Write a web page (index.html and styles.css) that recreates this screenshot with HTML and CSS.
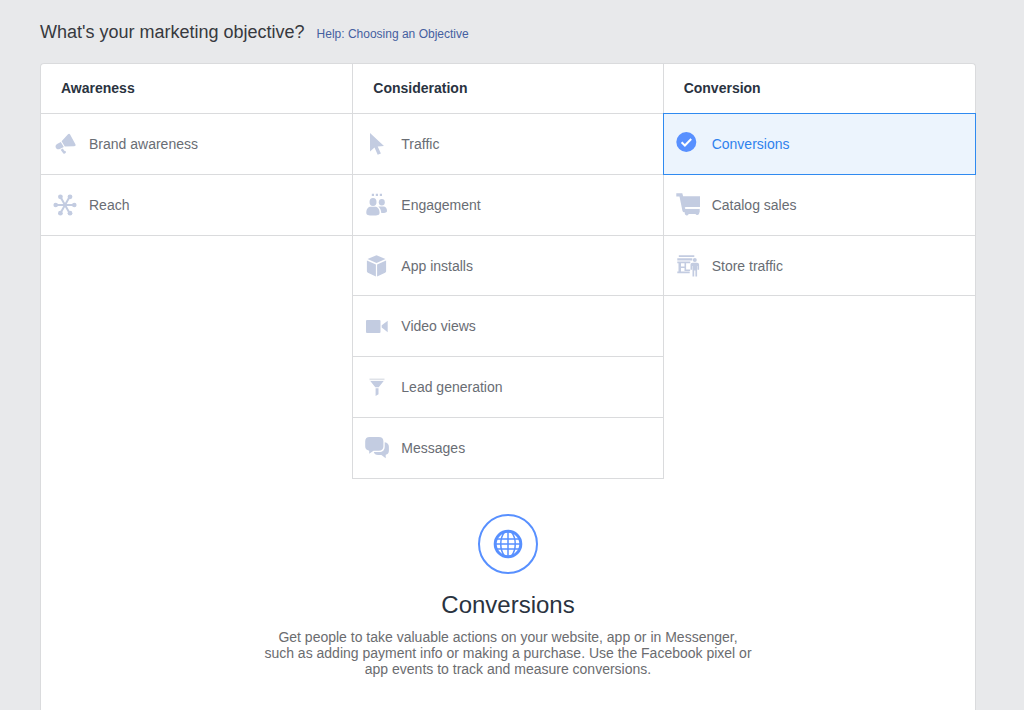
FILE: index.html
```html
<!DOCTYPE html>
<html lang="en">
<head>
<meta charset="utf-8">
<meta name="viewport" content="width=device-width, initial-scale=1">
<title>Marketing objective</title>
<link rel="stylesheet" href="styles.css">
</head>
<body>
<main class="page">
  <header class="page-header">
    <h1 class="page-title">What's your marketing objective?</h1>
    <a class="help-link" href="#help">Help: Choosing an Objective</a>
  </header>
  <div class="panel">
    <div class="columns">
      <section class="column">
        <h2 class="column-title">Awareness</h2>
        <div class="options">
          <button class="option" type="button">
            <svg class="icon" viewBox="0 0 24 24" aria-hidden="true"><path d="M15 2.300c.7-.9 1.600-.8 2.100.1l5.300 9.900c.6 1.300-.1 2-1.300 2l-9.300.3-3.200-5.400z"/><path d="M7.800 9.900l3 5.100-4 2c-3.500 1.600-6-3-2.700-5zM7.600 17.700l2.300-1.100 1.300 2.200 1.200.3c1.500 1.200-.4 3.500-2 2.300z"/></svg>
            <span>Brand awareness</span>
          </button>
          <button class="option" type="button">
            <svg class="icon" viewBox="0 0 24 24" aria-hidden="true"><path class="line" d="M3 12h18M7.500 4l9 16M16.500 4l-9 16"/><circle cx="2.700" cy="12" r="2.300"/><circle cx="21.300" cy="12" r="2.300"/><circle cx="7.400" cy="3.800" r="2.400"/><circle cx="17" cy="3.800" r="2.400"/><circle cx="7.400" cy="20.200" r="2.400"/><circle cx="17" cy="20.200" r="2.400"/></svg>
            <span>Reach</span>
          </button>
        </div>
      </section>
      <section class="column">
        <h2 class="column-title">Consideration</h2>
        <div class="options">
          <button class="option" type="button">
            <svg class="icon" viewBox="0 0 24 24" aria-hidden="true"><path d="M5 1v18.500l4.500-4 3.200 7.300 3.200-1.300-3.200-7 6.300-.5z"/></svg>
            <span>Traffic</span>
          </button>
          <button class="option" type="button">
            <svg class="icon" viewBox="0 0 24 24" aria-hidden="true"><path d="M6.800.800h2.200v2.200H6.800zM10.800.800H13v2.200h-2.200zM14.800.800H17v2.200h-2.200z"/><ellipse cx="8" cy="9" rx="3.500" ry="3.900"/><ellipse cx="16.800" cy="9.200" rx="3" ry="3.300"/><path d="M1.300 19.700c0-4.200 2.200-6 4.400-6H10c2.200 0 4.600 1.800 4.600 6 0 2.200-2 2.900-6.600 2.900s-6.700-.7-6.700-2.900zM13.300 13.400h5.200c2.100 0 3.500 1.700 3.500 4.500 0 1.500-1.900 2.100-5.700 2-.2-2.700-1.200-4.900-3-6.500z"/></svg>
            <span>Engagement</span>
          </button>
          <button class="option" type="button">
            <svg class="icon" viewBox="0 0 24 24" aria-hidden="true"><path d="M11.500 1.300l9 3.700-9 4-9-4zM1.900 6.500l9 3.900v12.200l-8-3.800c-.7-.4-1-.8-1-1.500zM21.100 6.500l-9 3.900v12.200l8-3.800c.7-.4 1-.8 1-1.500z"/></svg>
            <span>App installs</span>
          </button>
          <button class="option" type="button">
            <svg class="icon" viewBox="0 0 24 24" aria-hidden="true"><rect x="1" y="6" width="14.500" height="13" rx="1"/><path d="M22.700 6.800v11.400l-6-4.600v-2.300z"/></svg>
            <span>Video views</span>
          </button>
          <button class="option" type="button">
            <svg class="icon" viewBox="0 0 24 24" aria-hidden="true"><path class="pale" d="M4.500 3.500h15v1.700h-15z"/><path d="M5.300 6h13.400l-5 6.300h-3.400zM10.600 13.300h2.900v6l-2.900 1.600z"/></svg>
            <span>Lead generation</span>
          </button>
          <button class="option" type="button">
            <svg class="icon" viewBox="0 0 24 24" aria-hidden="true"><path d="M4.600 1h9.200c3 0 4.600 1.600 4.600 4.200v5.300c0 2.600-1.600 4.300-4.600 4.300H8.500l-4.300 3v-3.100C1.500 14 .2 12.900.2 10.500V5.200C.2 2.600 1.800 1 4.600 1z"/><path d="M19.700 6.300c2.700.5 4.200 1.800 4.200 4.400v4c0 2.300-1.200 3.700-3.200 4.100v3.500l-4.300-3.300h-3.300c-2.400 0-3.800-1.200-4.300-3h5.300c3.600 0 5.600-2 5.600-5.600z"/></svg>
            <span>Messages</span>
          </button>
        </div>
      </section>
      <section class="column">
        <h2 class="column-title">Conversion</h2>
        <div class="options">
          <button class="option option-selected" type="button" aria-pressed="true">
            <svg class="icon" viewBox="0 0 24 24" aria-hidden="true"><circle cx="10.300" cy="10" r="10"/><path class="tick" d="M5.600 10.200l3.300 3.300 6.300-6.500"/></svg>
            <span>Conversions</span>
          </button>
          <button class="option" type="button">
            <svg class="icon" viewBox="0 0 24 24" aria-hidden="true"><path d="M.3.300h6l.8 3h17v11H8.800l.3 1.500h14.600v3.700h-.6a2 2 0 0 1-3.600 1.600h-6.800A2 2 0 0 1 9 19.500c-1.500 0-2.400-.8-2.700-2.200L3.500 3.500H.3z"/><path class="gap" d="M9.500 14h14.500v1.800H9.500z"/></svg>
            <span>Catalog sales</span>
          </button>
          <button class="option" type="button">
            <svg class="icon" viewBox="0 0 24 24" aria-hidden="true"><path d="M2.800 1.300h15.500V3H2.800zM1.300 4.200h15v2.300h-15zM1.300 7.500h13v1.700H5v3.300h3.500V9.200h1.600v6.300h4v1.600h-5.600v-3H5v3.500h8.700v1.700H1.300v-1.700h1.200V9.200H1.300z"/><circle cx="18.800" cy="6" r="2"/><path d="M16.500 8.800h4.600c1.200 0 2 .8 2 2v5h-1.600V12h-.4v10.400h-1.700v-6h-1.200v6h-1.700V12h-.4v3.800h-1.600v-5c0-1.200.8-2 2-2z"/></svg>
            <span>Store traffic</span>
          </button>
        </div>
      </section>
    </div>
    <section class="summary">
      <div class="summary-badge">
        <svg class="globe" viewBox="0 0 30 30" aria-hidden="true"><circle class="globe-rim" cx="15" cy="15" r="12.800"/><path class="globe-grid" d="M15 2v26M3.500 10h23M2 15h26M3.500 20h23M11.500 3c-5 6.500-5 17.500 0 24M18.500 3c5 6.500 5 17.500 0 24"/></svg>
      </div>
      <h2 class="summary-title">Conversions</h2>
      <p class="summary-text">Get people to take valuable actions on your website, app or in Messenger, such as adding payment info or making a purchase. Use the Facebook pixel or app events to track and measure conversions.</p>
    </section>
  </div>
</main>
</body>
</html>
```
FILE: styles.css
```css
* {
  box-sizing: border-box;
}

body {
  margin: 0;
  background: #e8e9eb;
  color: #696d74;
  font-family: "Liberation Sans", Arial, sans-serif;
  font-size: 14px;
}

.page {
  display: flex;
  flex-direction: column;
  min-height: 100vh;
  padding: 20px 48px 0 40px;
}

.page-header {
  display: flex;
  align-items: baseline;
  gap: 12px;
  padding-bottom: 19px;
}

.page-title {
  margin: 0;
  color: #37393e;
  font-size: 18px;
  font-weight: normal;
  line-height: 24px;
}

.help-link {
  color: #4560a0;
  font-size: 12px;
  text-decoration: none;
}

.panel {
  flex: 1;
  border: 1px solid #dadbdd;
  border-bottom: 0;
  border-radius: 4px 4px 0 0;
  background: #fff;
}

.columns {
  display: grid;
  grid-template-columns: repeat(3, 1fr);
}

.column:nth-child(2) {
  border: 1px solid #dadbdd;
  border-width: 0 1px;
}

.column-title {
  margin: 0;
  padding: 16px 20px;
  border-bottom: 1px solid #dadbdd;
  color: #2a333f;
  font-size: 14px;
  line-height: 17px;
}

.options {
  display: grid;
  grid-template-rows: repeat(6, 1fr);
  min-height: 365px;
}

.option {
  display: flex;
  align-items: center;
  gap: 12px;
  padding: 0 12px;
  border: 0;
  border-bottom: 1px solid #dadbdd;
  background: #fff;
  color: inherit;
  font: inherit;
  text-align: left;
  cursor: pointer;
}

.option-selected {
  position: relative;
  margin: -1px -1px 0;
  border: 1px solid #2f8af0;
  background: #ecf4fd;
  color: #2f82ed;
}

.icon {
  flex: none;
  width: 24px;
  height: 24px;
  fill: #c3cce1;
}

.option-selected .icon {
  fill: #5890ff;
}

.line {
  stroke: #c3cce1;
  stroke-width: 2;
}

.pale {
  fill: #dfe2e8;
}

.gap {
  fill: #fff;
}

.tick {
  fill: none;
  stroke: #fff;
  stroke-width: 2;
}

.summary {
  display: flex;
  flex-direction: column;
  align-items: center;
  padding: 35px 24px 32px;
  text-align: center;
}

.summary-badge {
  display: flex;
  align-items: center;
  justify-content: center;
  width: 60px;
  height: 60px;
  border: 2px solid #5890ff;
  border-radius: 50%;
}

.globe {
  width: 30px;
  height: 30px;
  fill: none;
  stroke: #5890ff;
}

.globe-rim {
  stroke-width: 3;
}

.globe-grid {
  stroke-width: 1.5;
}

.summary-title {
  margin: 15px 0 8px;
  color: #2a333f;
  font-size: 24px;
  font-weight: normal;
  line-height: 32px;
}

.summary-text {
  max-width: 492px;
  margin: 0;
  color: #6b6c6f;
  line-height: 16px;
}
```
